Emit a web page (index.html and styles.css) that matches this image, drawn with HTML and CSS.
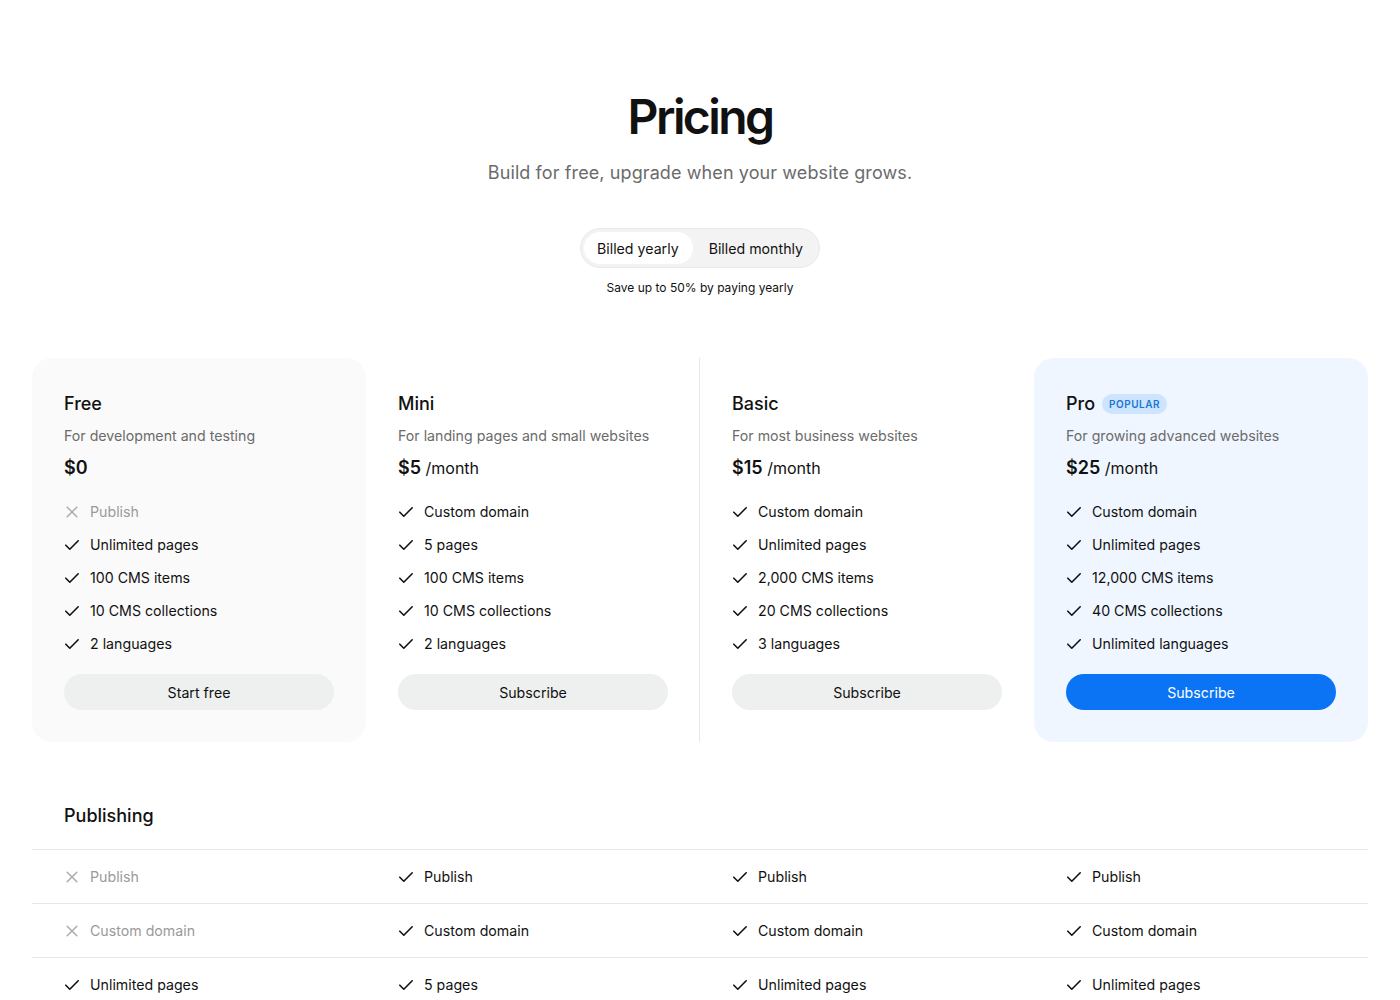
FILE: index.html
```html
<!DOCTYPE html>
<html lang="en">
<head>
<meta charset="utf-8">
<title>Pricing</title>
<link rel="stylesheet" href="styles.css">
</head>
<body>
<svg width="0" height="0" style="position:absolute">
  <defs>
    <symbol id="ic-check" viewBox="0 0 16 16"><path d="M1.8 8.2 L5.8 12.2 L14.2 3.8" fill="none" stroke="currentColor" stroke-width="1.6" stroke-linecap="round" stroke-linejoin="round"/></symbol>
    <symbol id="ic-x" viewBox="0 0 16 16"><path d="M3.2 3.2 L12.8 12.8 M12.8 3.2 L3.2 12.8" fill="none" stroke="currentColor" stroke-width="1.4" stroke-linecap="round"/></symbol>
  </defs>
</svg>
<main class="page">
  <header class="hero">
    <h1 class="title">Pricing</h1>
    <p class="subtitle">Build for free, upgrade when your website grows.</p>
    <div class="toggle">
      <span class="toggle-item active">Billed yearly</span>
      <span class="toggle-item">Billed monthly</span>
    </div>
    <p class="save">Save up to 50% by paying yearly</p>
  </header>

  <section class="plans">
    <div class="plan plan-free">
      <h2 class="plan-name">Free</h2>
      <p class="plan-desc">For development and testing</p>
      <p class="plan-price"><strong>$0</strong></p>
      <ul class="features">
        <li class="off"><svg class="ic"><use href="#ic-x"/></svg>Publish</li>
        <li><svg class="ic"><use href="#ic-check"/></svg>Unlimited pages</li>
        <li><svg class="ic"><use href="#ic-check"/></svg>100 CMS items</li>
        <li><svg class="ic"><use href="#ic-check"/></svg>10 CMS collections</li>
        <li><svg class="ic"><use href="#ic-check"/></svg>2 languages</li>
      </ul>
      <button class="btn">Start free</button>
    </div>
    <div class="plan plan-mini">
      <h2 class="plan-name">Mini</h2>
      <p class="plan-desc">For landing pages and small websites</p>
      <p class="plan-price"><strong>$5</strong> <span>/month</span></p>
      <ul class="features">
        <li><svg class="ic"><use href="#ic-check"/></svg>Custom domain</li>
        <li><svg class="ic"><use href="#ic-check"/></svg>5 pages</li>
        <li><svg class="ic"><use href="#ic-check"/></svg>100 CMS items</li>
        <li><svg class="ic"><use href="#ic-check"/></svg>10 CMS collections</li>
        <li><svg class="ic"><use href="#ic-check"/></svg>2 languages</li>
      </ul>
      <button class="btn">Subscribe</button>
    </div>
    <div class="plan plan-basic">
      <h2 class="plan-name">Basic</h2>
      <p class="plan-desc">For most business websites</p>
      <p class="plan-price"><strong>$15</strong> <span>/month</span></p>
      <ul class="features">
        <li><svg class="ic"><use href="#ic-check"/></svg>Custom domain</li>
        <li><svg class="ic"><use href="#ic-check"/></svg>Unlimited pages</li>
        <li><svg class="ic"><use href="#ic-check"/></svg>2,000 CMS items</li>
        <li><svg class="ic"><use href="#ic-check"/></svg>20 CMS collections</li>
        <li><svg class="ic"><use href="#ic-check"/></svg>3 languages</li>
      </ul>
      <button class="btn">Subscribe</button>
    </div>
    <div class="plan plan-pro">
      <h2 class="plan-name">Pro <span class="badge">POPULAR</span></h2>
      <p class="plan-desc">For growing advanced websites</p>
      <p class="plan-price"><strong>$25</strong> <span>/month</span></p>
      <ul class="features">
        <li><svg class="ic"><use href="#ic-check"/></svg>Custom domain</li>
        <li><svg class="ic"><use href="#ic-check"/></svg>Unlimited pages</li>
        <li><svg class="ic"><use href="#ic-check"/></svg>12,000 CMS items</li>
        <li><svg class="ic"><use href="#ic-check"/></svg>40 CMS collections</li>
        <li><svg class="ic"><use href="#ic-check"/></svg>Unlimited languages</li>
      </ul>
      <button class="btn btn-primary">Subscribe</button>
    </div>
  </section>

  <section class="compare">
    <h3 class="compare-title">Publishing</h3>
    <div class="compare-row">
      <div class="cell off"><svg class="ic"><use href="#ic-x"/></svg>Publish</div>
      <div class="cell"><svg class="ic"><use href="#ic-check"/></svg>Publish</div>
      <div class="cell"><svg class="ic"><use href="#ic-check"/></svg>Publish</div>
      <div class="cell"><svg class="ic"><use href="#ic-check"/></svg>Publish</div>
    </div>
    <div class="compare-row">
      <div class="cell off"><svg class="ic"><use href="#ic-x"/></svg>Custom domain</div>
      <div class="cell"><svg class="ic"><use href="#ic-check"/></svg>Custom domain</div>
      <div class="cell"><svg class="ic"><use href="#ic-check"/></svg>Custom domain</div>
      <div class="cell"><svg class="ic"><use href="#ic-check"/></svg>Custom domain</div>
    </div>
    <div class="compare-row">
      <div class="cell"><svg class="ic"><use href="#ic-check"/></svg>Unlimited pages</div>
      <div class="cell"><svg class="ic"><use href="#ic-check"/></svg>5 pages</div>
      <div class="cell"><svg class="ic"><use href="#ic-check"/></svg>Unlimited pages</div>
      <div class="cell"><svg class="ic"><use href="#ic-check"/></svg>Unlimited pages</div>
    </div>
  </section>
</main>
</body>
</html>
```

FILE: styles.css
```css
* { box-sizing: border-box; }
html, body { margin: 0; padding: 0; background: #fff; }
body {
  font-family: Inter, "Noto Sans", "Liberation Sans", sans-serif;
  color: #171717;
  -webkit-font-smoothing: antialiased;
}
.page { padding: 0 32px; }

.hero {
  display: flex;
  flex-direction: column;
  align-items: center;
  padding-top: 88px;
}
.title {
  margin: 0;
  font-size: 48px;
  line-height: 58px;
  font-weight: 600;
  letter-spacing: -2.6px;
  color: #111;
}
.subtitle {
  margin: 13px 0 0;
  font-size: 18px;
  line-height: 28px;
  color: #6b6b6b;
  letter-spacing: 0.1px;
}
.toggle {
  margin-top: 41px;
  display: flex;
  align-items: center;
  height: 40px;
  padding: 3px;
  background: #f3f3f3;
  border: 1px solid #e9e9e9;
  border-radius: 20px;
}
.toggle-item {
  display: flex;
  align-items: center;
  height: 32px;
  padding: 0 14px 0 13px;
  font-size: 14.2px;
  color: #111;
  border-radius: 16px;
}
.toggle-item + .toggle-item { padding: 0 13px 0 16px; }
.toggle-item.active { background: #fff; }
.save {
  margin: 10px 0 0;
  font-size: 12px;
  line-height: 20px;
  color: #111;
}

.plans {
  margin-top: 60px;
  display: grid;
  grid-template-columns: repeat(4, 1fr);
}
.plan {
  padding: 33px 32px 32px;
  display: flex;
  flex-direction: column;
  border-radius: 20px;
}
.plan-free { background: #fafafa; }
.plan-pro { background: #eff6ff; }
.plan-basic { border-left: 1px solid #e8e8e8; border-radius: 0; margin-left: -1px; }
.plan-name {
  margin: 0;
  display: flex;
  align-items: center;
  gap: 7px;
  font-size: 18px;
  line-height: 26px;
  font-weight: 500;
  color: #111;
}
.badge {
  display: inline-flex;
  align-items: center;
  height: 20px;
  padding: 0 7px;
  border-radius: 10px;
  background: #cce4fd;
  color: #1c74d4;
  font-size: 10px;
  font-weight: 600;
  letter-spacing: 0.5px;
}
.plan-desc {
  margin: 8px 0 0;
  font-size: 14.2px;
  line-height: 22px;
  color: #6b6b6b;
}
.plan-price {
  margin: 8px 0 0;
  font-size: 16px;
  line-height: 26px;
  color: #111;
}
.plan-price strong { font-size: 18px; font-weight: 600; }
.features {
  list-style: none;
  margin: 20px 0 0;
  padding: 0;
  display: flex;
  flex-direction: column;
  gap: 11px;
}
.features li, .cell {
  display: flex;
  align-items: center;
  gap: 10px;
  font-size: 14.2px;
  line-height: 22px;
  color: #111;
}
.ic { width: 16px; height: 16px; flex: none; color: #111; }
.off { color: #9a9a9a !important; }
.off .ic { color: #a8a8a8; }
.btn {
  margin-top: 19px;
  height: 36px;
  width: 100%;
  border: 0;
  border-radius: 18px;
  background: #eef0ef;
  font-family: inherit;
  font-size: 14.2px;
  color: #111;
}
.btn-primary { background: #0a74f5; color: #fff; }

.compare { margin-top: 61px; }
.compare-title {
  margin: 0;
  padding: 0 32px 20px;
  font-size: 18px;
  line-height: 26px;
  font-weight: 500;
  color: #111;
  border-bottom: 1px solid #e6e6e6;
}
.compare-row {
  display: grid;
  grid-template-columns: repeat(4, 1fr);
  height: 54px;
  border-bottom: 1px solid #e6e6e6;
}
.cell { padding: 0 32px; }
```
